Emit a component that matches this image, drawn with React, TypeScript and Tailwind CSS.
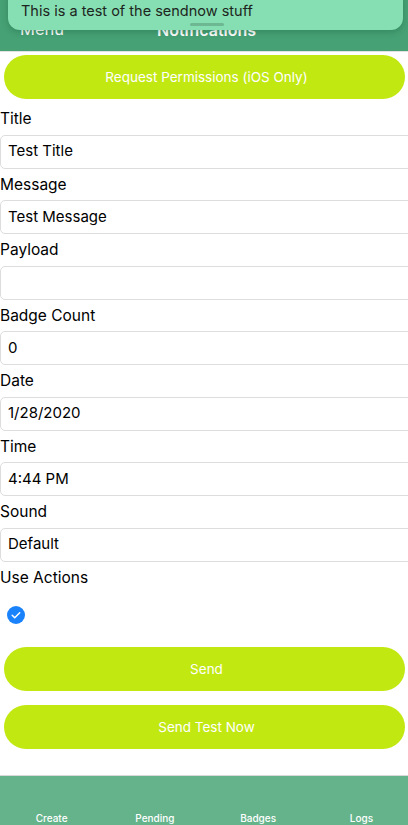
const fields = [
  { label: "Title", value: "Test Title" },
  { label: "Message", value: "Test Message" },
  { label: "Payload", value: "" },
  { label: "Badge Count", value: "0" },
  { label: "Date", value: "1/28/2020" },
  { label: "Time", value: "4:44 PM" },
  { label: "Sound", value: "Default" },
];

const tabs = ["Create", "Pending", "Badges", "Logs"];

function PillButton({ children }: { children: React.ReactNode }) {
  return (
    <button className="ml-1 h-[44px] w-[401px] rounded-full bg-[#c2e812] text-[13.5px] text-white flex items-center justify-center pl-[4px]">
      {children}
    </button>
  );
}

export default function App() {
  return (
    <div
      className="relative w-[408px] h-[825px] overflow-hidden bg-white text-black"
      style={{ fontFamily: "Inter, 'Noto Sans', sans-serif" }}
    >
      <header className="relative h-[52px] bg-[#46a175] border-b border-[#e2e2e2]">
        <div className="flex items-center h-[51px] pt-[8px] px-[20px] text-white text-[16.5px]">
          <span className="w-[137px]">Menu</span>
          <span className="font-semibold text-[16px]">Notifications</span>
        </div>
      </header>

      {/* push banner over the header */}
      <div className="absolute left-[8px] top-[-12px] w-[395px] h-[42px] rounded-[12px] bg-[#86dfb3] shadow-[0_2px_6px_rgba(0,60,30,0.25)]">
        <p className="pl-[13px] pt-[13px] text-[14.5px] leading-[20px] text-[#1d2520]">
          This is a test of the sendnow stuff
        </p>
        <div className="absolute left-[182px] top-[35px] w-[34px] h-[3px] rounded-full bg-[#6db893]" />
      </div>

      <div className="pt-[3px]">
        <PillButton>Request Permissions (iOS Only)</PillButton>
      </div>

      <div className="flex flex-col pt-[4px]">
        {fields.map((f) => (
          <div key={f.label} className="flex flex-col">
            <div className="h-[31.5px] flex items-center text-[15.5px]">{f.label}</div>
            <div className="h-[34px] w-[412px] border border-[#dddddd] rounded-[5px] flex items-center pl-[7px] text-[15px]">
              {f.value}
            </div>
          </div>
        ))}
        <div className="h-[31.5px] flex items-center text-[15.5px]">Use Actions</div>
      </div>

      <div className="h-[44px] flex items-center pl-[7px]">
        <svg width="18" height="18" viewBox="0 0 18 18">
          <circle cx="9" cy="9" r="9" fill="#1a82fb" />
          <path d="M5.2 9.3l2.5 2.4 5-5" fill="none" stroke="white" strokeWidth="1.5" strokeLinecap="round" strokeLinejoin="round" />
        </svg>
      </div>

      <div className="flex flex-col gap-[14px] pt-[10px]">
        <PillButton>Send</PillButton>
        <PillButton>Send Test Now</PillButton>
      </div>

      <nav className="absolute left-0 top-[775px] w-[413px] h-[60px] bg-[#65b38b] border-t border-[#d9d9d9] grid grid-cols-4">
        {tabs.map((t) => (
          <div key={t} className="flex items-end justify-center pb-[9px] text-[10px] font-medium text-white">
            {t}
          </div>
        ))}
      </nav>
    </div>
  );
}
